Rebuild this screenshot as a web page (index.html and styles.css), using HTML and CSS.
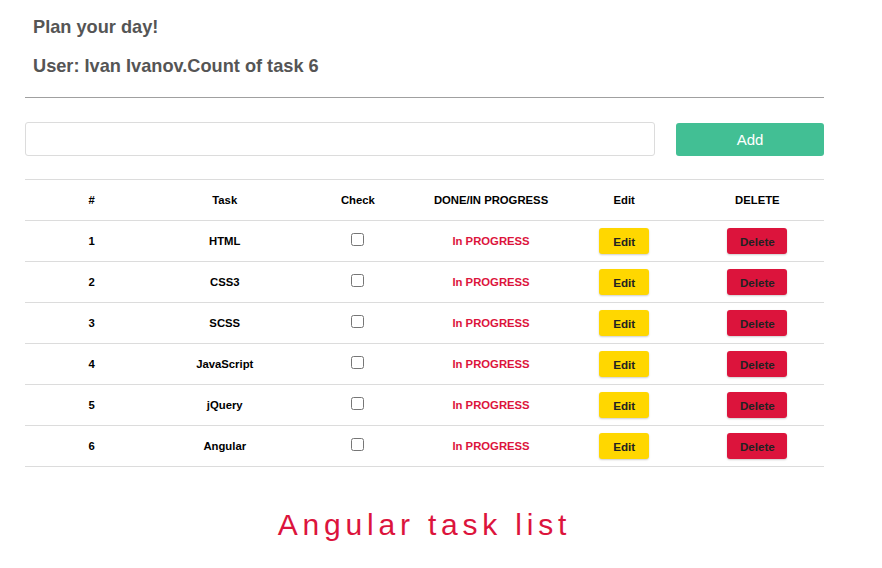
FILE: index.html
```html
<!DOCTYPE html>
<html>
<head>
<meta charset="utf-8">
<link rel="stylesheet" href="styles.css">
</head>
<body>
<div class="container">
  <h3 class="title">Plan your day!</h3>
  <h3 class="user">User: Ivan Ivanov.Count of task 6</h3>
  <hr class="sep">
  <div class="add-row">
    <input class="task-input" type="text">
    <button class="btn-add">Add</button>
  </div>
  <table class="tasks">
    <thead>
      <tr><th>#</th><th>Task</th><th>Check</th><th>DONE/IN PROGRESS</th><th>Edit</th><th>DELETE</th></tr>
    </thead>
    <tbody>
      <tr><td>1</td><td>HTML</td><td><input type="checkbox" class="chk"></td><td class="status">In PROGRESS</td><td><button class="btn-edit">Edit</button></td><td><button class="btn-del">Delete</button></td></tr>
      <tr><td>2</td><td>CSS3</td><td><input type="checkbox" class="chk"></td><td class="status">In PROGRESS</td><td><button class="btn-edit">Edit</button></td><td><button class="btn-del">Delete</button></td></tr>
      <tr><td>3</td><td>SCSS</td><td><input type="checkbox" class="chk"></td><td class="status">In PROGRESS</td><td><button class="btn-edit">Edit</button></td><td><button class="btn-del">Delete</button></td></tr>
      <tr><td>4</td><td>JavaScript</td><td><input type="checkbox" class="chk"></td><td class="status">In PROGRESS</td><td><button class="btn-edit">Edit</button></td><td><button class="btn-del">Delete</button></td></tr>
      <tr><td>5</td><td>jQuery</td><td><input type="checkbox" class="chk"></td><td class="status">In PROGRESS</td><td><button class="btn-edit">Edit</button></td><td><button class="btn-del">Delete</button></td></tr>
      <tr><td>6</td><td>Angular</td><td><input type="checkbox" class="chk"></td><td class="status">In PROGRESS</td><td><button class="btn-edit">Edit</button></td><td><button class="btn-del">Delete</button></td></tr>
    </tbody>
  </table>
  <div class="footer">Angular task list</div>
</div>
</body>
</html>
```
FILE: styles.css
```css
html, body {
  margin: 0;
  padding: 0;
  background: #fff;
  font-family: "Liberation Sans", Arial, sans-serif;
}
.container {
  width: 799px;
  margin-left: 25px;
}
.title, .user {
  margin: 0;
  padding-left: 8px;
  font-size: 18.2px;
  font-weight: bold;
  color: #555;
  line-height: 20px;
}
.title { padding-top: 17px; }
.user { padding-top: 19px; }
.sep {
  margin: 21px 0 0;
  border: 0;
  border-top: 1px solid #a0a0a0;
  height: 0;
}
.add-row {
  display: flex;
  gap: 21px;
  margin-top: 24px;
  align-items: flex-start;
}
.task-input {
  flex: 1;
  height: 34px;
  box-sizing: border-box;
  border: 1px solid #dcdcdc;
  border-radius: 3px;
  margin: 0;
  padding: 0 10px;
}
.btn-add {
  width: 148px;
  height: 33px;
  margin-top: 1px;
  border: 0;
  border-radius: 3px;
  background: #42bf94;
  color: #fff;
  font-family: "Liberation Sans", Arial, sans-serif;
  font-size: 15px;
}
.tasks {
  margin-top: 23px;
  width: 799px;
  border-collapse: collapse;
  table-layout: fixed;
  font-size: 11.3px;
  color: #000;
}
.tasks th, .tasks td {
  border-top: 1px solid #dcdcdc;
  height: 40px;
  padding: 0;
  text-align: center;
  vertical-align: middle;
  font-weight: bold;
}
.tasks tbody tr:last-child td { border-bottom: 1px solid #dcdcdc; }
.chk {
  margin: 0 0 4px;
  width: 13px;
  height: 13px;
  vertical-align: middle;
}
.status { color: #dc143c; }
.btn-edit, .btn-del {
  height: 26px;
  border: 0;
  border-radius: 3px;
  font-family: "Liberation Sans", Arial, sans-serif;
  font-size: 11.6px;
  font-weight: bold;
  color: #222;
  box-shadow: 0 1px 2px rgba(0,0,0,0.2);
  padding: 0;
}
.btn-edit { width: 50px; background: #ffd700; }
.btn-del { width: 60px; background: #dc143c; }
.footer {
  margin-top: 40px;
  text-align: center;
  color: #dc143c;
  font-size: 30px;
  letter-spacing: 4.8px;
  line-height: 36px;
}
```
